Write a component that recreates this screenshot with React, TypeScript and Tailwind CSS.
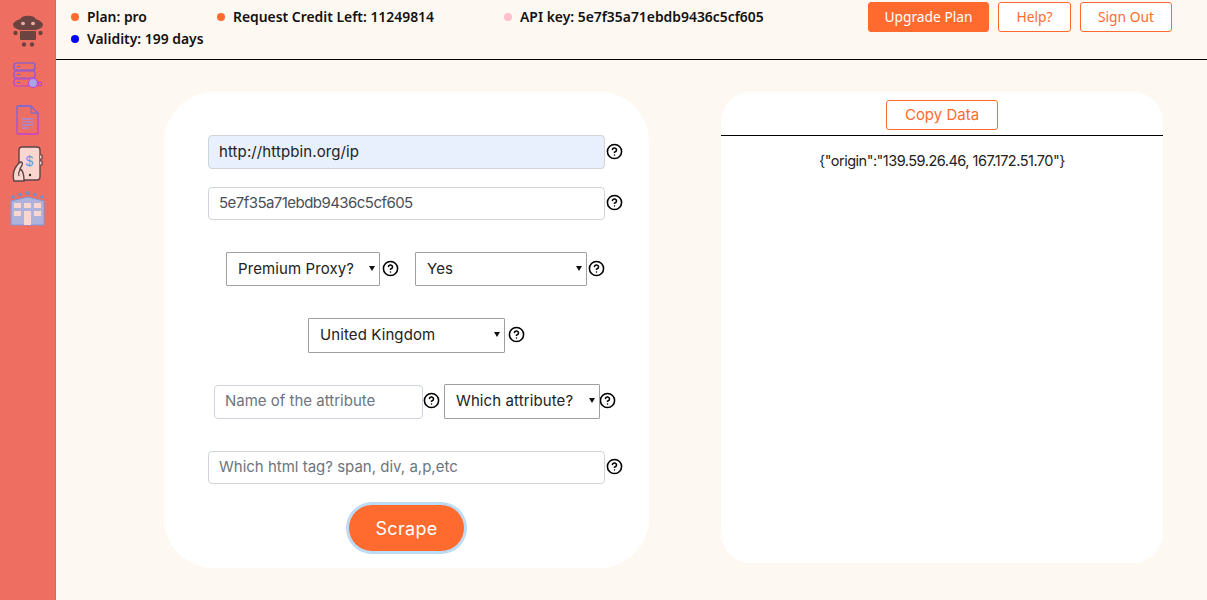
import React from 'react';
import { CircleHelp } from 'lucide-react';

const Help: React.FC<{ className?: string }> = ({ className }) => (
  <CircleHelp className={`w-[17px] h-[17px] -mx-[1px] mb-[2px] shrink-0 text-black ${className || ''}`} strokeWidth={2.2} />
);

const RobotIcon = () => (
  <svg width="32" height="33" viewBox="0 0 32 33" fill="#6b4442">
    <path d="M1 9 C3 5 8 5 9 3 C11 0 21 0 23 3 C24 5 29 5 31 9 C31 13 27 14 24 15 H8 C5 14 1 13 1 9 Z" />
    <ellipse cx="11" cy="8.500" rx="2" ry="1.700" fill="#e8b0a6" />
    <ellipse cx="21" cy="8.500" rx="2" ry="1.700" fill="#e8b0a6" />
    <rect x="8" y="16" width="16" height="9" rx="1" />
    <circle cx="3.500" cy="18" r="2.200" />
    <circle cx="28.500" cy="18" r="2.200" />
    <circle cx="12" cy="29.500" r="2.200" />
    <circle cx="20" cy="29.500" r="2.200" />
  </svg>
);

const ServerIcon = () => (
  <svg width="30" height="30" viewBox="0 0 30 30" fill="none" stroke="#8a4fe0" strokeWidth="1.200">
    <rect x="1" y="1" width="21" height="7" rx="2" stroke="#6a5af0" />
    <rect x="1" y="9" width="21" height="7" rx="2" stroke="#8a50e8" />
    <rect x="1" y="17" width="21" height="7" rx="2" stroke="#b045e0" />
    <path d="M4 4.500h3M4 12.500h3M4 20.500h3" stroke="#6a5af0" />
    <circle cx="20" cy="21" r="4.500" fill="#a9a6e4" stroke="#c040d8" />
    <circle cx="27" cy="22" r="1.800" stroke="#c040d8" />
  </svg>
);

const DocIcon = () => (
  <svg width="23" height="30" viewBox="0 0 23 30" fill="none">
    <defs>
      <linearGradient id="docline" x1="0" y1="0" x2="0.4" y2="1">
        <stop offset="0" stopColor="#5a6cf0" />
        <stop offset="1" stopColor="#c83fd0" />
      </linearGradient>
    </defs>
    <path d="M1 2a1 1 0 0 1 1-1h13l7 7v20a1 1 0 0 1-1 1H2a1 1 0 0 1-1-1Z" stroke="url(#docline)" strokeWidth="1.300" />
    <path d="M15 1v7h7" stroke="#5a6cf0" strokeWidth="1" />
    <path d="M6 14h11M6 17h11M6 20h11M6 23h7" stroke="#a68ad8" strokeWidth="1.400" />
  </svg>
);

const PhoneIcon = () => (
  <svg width="32" height="36" viewBox="0 0 32 36" fill="none">
    <rect x="7" y="1" width="21" height="33" rx="3" fill="#fbd6d0" stroke="#5c4445" strokeWidth="1.400" />
    <path d="M28 9h2v4h-2M28 15h2v4h-2" fill="#fbd6d0" stroke="#5c4445" strokeWidth="1.200" />
    <text x="17.500" y="20" fontSize="14" textAnchor="middle" fill="#5b9be8" fontFamily="Liberation Sans, sans-serif">$</text>
    <circle cx="18" cy="29" r="1.200" fill="#3a2a2a" />
    <path d="M2 35 C0 28 2 22 7 17 C9 15 11 16 10 19 L8 23 C11 24 12 29 12 35 Z" fill="#fbd6d0" stroke="#5c4445" strokeWidth="1.400" />
    <path d="M7 30 C6 27 7 25 9 23" stroke="#5c4445" strokeWidth="1.200" />
  </svg>
);

const BuildingIcon = () => (
  <svg width="35" height="35" viewBox="0 0 35 35" fill="none">
    <path d="M1 10 L17.500 6 L34 10 V34 H1 Z" fill="#adb3db" stroke="#7f97d8" strokeWidth="1" />
    <g fill="#fbd6d0">
      <rect x="4" y="12" width="7" height="5" />
      <rect x="14" y="12" width="7" height="5" />
      <rect x="24" y="12" width="7" height="5" />
      <rect x="4" y="20" width="7" height="5" />
      <rect x="24" y="20" width="7" height="5" />
      <rect x="14" y="20" width="7" height="14" />
    </g>
    <g fill="#6f8fd0">
      <circle cx="3" cy="6" r="1.800" />
      <circle cx="10" cy="3.500" r="1.800" />
      <circle cx="17.500" cy="2" r="2" />
      <circle cx="25" cy="3.500" r="1.800" />
      <circle cx="32" cy="6" r="1.800" />
    </g>
  </svg>
);

const Stat: React.FC<{ dot: string; className?: string; children: React.ReactNode }> = ({ dot, className, children }) => (
  <div className={`flex items-center gap-[8px] ${className || ''}`}>
    <span className={`w-[8px] h-[8px] rounded-full ${dot}`} />
    <span>{children}</span>
  </div>
);

const fieldFont = "font-['Inter',sans-serif] text-[15px]";

const Select: React.FC<{ label: string; className: string }> = ({ label, className }) => (
  <div className={`relative shrink-0 ${className}`}>
    <select
      defaultValue={label}
      className={`appearance-none w-full h-full pl-[11px] border border-[#a0a0a0] rounded-[1px] bg-white text-[#222] tracking-[0.1px] ${fieldFont}`}
    >
      <option>{label}</option>
    </select>
    <svg className="absolute right-[5px] top-[14px] pointer-events-none" width="6" height="5" viewBox="0 0 6 5">
      <path d="M0 0h6L3 5Z" fill="#111" />
    </svg>
  </div>
);

export default function App() {
  return (
    <div className="flex min-h-[600px] h-[600px] overflow-hidden bg-[#fef8f2] font-['Inter',sans-serif]">
      {/* Sidebar */}
      <div className="w-[56px] shrink-0 bg-[#ee6f61] border-r border-[#d9675a] flex flex-col items-center pt-[15px]">
        <RobotIcon />
        <div className="mt-[14px]"><ServerIcon /></div>
        <div className="mt-[13px]"><DocIcon /></div>
        <div className="mt-[11px]"><PhoneIcon /></div>
        <div className="mt-[9px]"><BuildingIcon /></div>
      </div>

      <div className="flex-1 min-w-0 flex flex-col">
        {/* Header */}
        <div className="h-[60px] shrink-0 border-b border-black flex justify-between pl-[15px] pr-[35px]">
          <div className="pt-[6px] font-['Noto_Sans',sans-serif] font-semibold text-[13.9px] leading-[21px] text-[#111]">
            <div className="flex">
              <Stat dot="bg-[#ff6b2f]" className="w-[146px]">Plan: pro</Stat>
              <Stat dot="bg-[#ff6b2f]" className="w-[287px]">Request Credit Left: 11249814</Stat>
              <Stat dot="bg-[#ffc0cb]">API key: 5e7f35a71ebdb9436c5cf605</Stat>
            </div>
            <Stat dot="bg-[#0000ff]" className="mt-[1px]">Validity: 199 days</Stat>
          </div>
          <div className="flex gap-[9px] pt-[2px] items-start font-['Noto_Sans',sans-serif] text-[13.8px]">
            <button className="h-[30px] w-[121px] rounded-[3px] bg-[#ff6b2f] border border-[#ff6b2f] text-white">Upgrade Plan</button>
            <button className="h-[30px] w-[73px] rounded-[3px] bg-white border border-[#ff6b2f] text-[#ff6b2f]">Help?</button>
            <button className="h-[30px] w-[92px] rounded-[3px] bg-white border border-[#ff6b2f] text-[#ff6b2f]">Sign Out</button>
          </div>
        </div>

        {/* Main */}
        <div className="flex-1 flex items-start pt-[32px] pl-[108px]">
          {/* Form card */}
          <div className="w-[485px] h-[476px] rounded-[50px] bg-white flex flex-col items-center pt-[43px]">
            <div className="flex items-center gap-[2px] ml-[17px]">
              <input readOnly value="http://httpbin.org/ip" className={`w-[397px] h-[34px] pb-[2px] px-[10px] rounded-[4px] bg-[#e8f0fe] border border-[#ced4da] text-[#222] tracking-[0.1px] ${fieldFont}`} />
              <Help />
            </div>
            <div className="flex items-center gap-[2px] ml-[17px] mt-[18px]">
              <input readOnly value="5e7f35a71ebdb9436c5cf605" className={`w-[397px] h-[33px] pb-[2px] px-[10px] rounded-[4px] bg-white border border-[#ced4da] text-[#495057] tracking-[-0.55px] ${fieldFont}`} />
              <Help />
            </div>
            <div className="flex items-center mt-[32px] ml-[17px]">
              <Select label="Premium Proxy?" className="w-[154px] h-[34px]" />
              <Help className="ml-[2px]" />
              <Select label="Yes" className="w-[172px] h-[34px] ml-[17px]" />
              <Help className="ml-[1px]" />
            </div>
            <div className="flex items-center mt-[32px] ml-[19px]">
              <Select label="United Kingdom" className="w-[197px] h-[35px]" />
              <Help className="ml-[3px]" />
            </div>
            <div className="flex items-center mt-[31px] ml-[16px]">
              <input placeholder="Name of the attribute" className={`w-[209px] h-[34px] pb-[2px] px-[10px] rounded-[4px] bg-white border border-[#ced4da] placeholder:text-[#6c757d] ${fieldFont}`} />
              <Help className="ml-[0px]" />
              <Select label="Which attribute?" className="w-[156px] h-[35px] ml-[5px]" />
              <Help />
            </div>
            <div className="flex items-center gap-[2px] ml-[17px] mt-[32px]">
              <input placeholder="Which html tag? span, div, a,p,etc" className={`w-[397px] h-[33px] pb-[2px] px-[10px] rounded-[4px] bg-white border border-[#ced4da] placeholder:text-[#6c757d] ${fieldFont}`} />
              <Help />
            </div>
            <button className="mt-[21px] w-[115px] h-[46px] rounded-full bg-[#ff6b2f] ring-[3px] ring-[#bcdcf5] text-white text-[18px] tracking-[0.3px]">Scrape</button>
          </div>

          {/* Output card */}
          <div className="ml-[72px] w-[442px] h-[471px] rounded-[30px] bg-white">
            <div className="h-[44px] border-b border-black flex justify-center pt-[8px]">
              <button className="h-[30px] w-[112px] rounded-[3px] bg-white border border-[#ff6b2f] text-[#ff6b2f] text-[15px]">Copy Data</button>
            </div>
            <p className="mt-[14px] text-center text-[14.5px] tracking-[-0.5px] text-[#222]">{'{"origin":"139.59.26.46, 167.172.51.70"}'}</p>
          </div>
        </div>
      </div>
    </div>
  );
}
